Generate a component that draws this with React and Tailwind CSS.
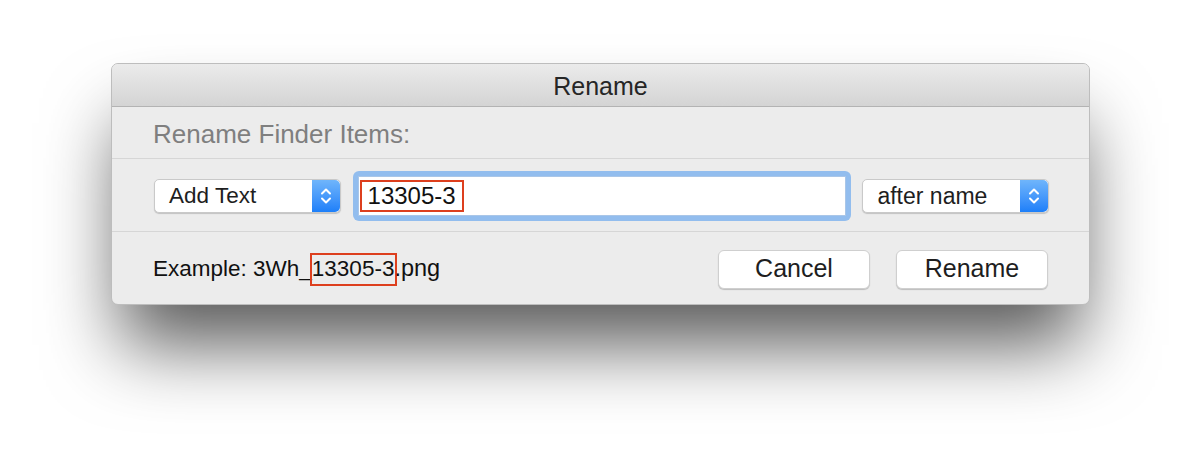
import React from 'react';

const font = { fontFamily: '"Liberation Sans", Arial, sans-serif' };

function Stepper() {
    return (
        <div className="w-[28px] self-stretch flex items-center justify-center rounded-r-[5px] bg-gradient-to-b from-[#6fb5fb] to-[#1c7ff9]">
            <svg width="12" height="20" viewBox="0 0 12 20" fill="none" stroke="white" strokeWidth="2" strokeLinecap="round" strokeLinejoin="round">
                <path d="M2 7.5 L6 3.5 L10 7.5" />
                <path d="M2 12.5 L6 16.5 L10 12.5" />
            </svg>
        </div>
    );
}

function Popup({ label, className, textSize }) {
    return (
        <div className={`h-[34px] flex items-stretch bg-white rounded-[5px] border border-[#c9c9c9] shadow-[0_1px_1px_rgba(0,0,0,0.18)] ${className}`}>
            <div className={`flex-1 flex items-center pl-[14px] text-[#1e1e1e] ${textSize}`}>{label}</div>
            <Stepper />
        </div>
    );
}

function Button({ children }) {
    return (
        <button className="w-[152px] h-[39px] bg-white rounded-[6px] border border-[#cfcfcf] shadow-[0_1px_1px_rgba(0,0,0,0.2)] text-[25px] text-[#1e1e1e] flex items-center justify-center">
            {children}
        </button>
    );
}

export default function App() {
    return (
        <div className="w-[1202px] h-[464px] bg-white pt-[63px] pl-[111px]" style={font}>
            <div className="w-[979px] rounded-[7px] bg-[#ececec] border border-[#bdbdbd] shadow-[0_50px_75px_-10px_rgba(0,0,0,0.65)] overflow-hidden">
                {/* title bar */}
                <div className="h-[43px] pt-[4px] flex items-center justify-center bg-gradient-to-b from-[#ebebeb] to-[#d4d4d4] border-b border-[#b3b3b3] text-[25px] text-[#262626]">
                    Rename
                </div>

                {/* heading */}
                <div className="h-[52px] pt-[4px] flex items-center pl-[41px] border-b border-[#d6d6d6] text-[26px] text-[#7f7f7f]">
                    Rename Finder Items:
                </div>

                {/* controls */}
                <div className="h-[73px] pt-[2px] flex items-center pl-[42px] pr-[40px] border-b border-[#d6d6d6]">
                    <Popup label="Add Text" className="w-[187px]" textSize="text-[22.5px]" />
                    <div className="ml-[12px] w-[500px] h-[50px] rounded-[6px] bg-[#92bdee] p-[5px]">
                        <div className="w-full h-full bg-white border border-[#a9c6e8] flex items-center pl-[1px]">
                            <span className="border-2 border-[#dd3f1e] h-[32px] flex items-center px-[6px] text-[24px] text-[#111]">13305-3</span>
                        </div>
                    </div>
                    <Popup label="after name" className="ml-[11px] w-[187px]" textSize="text-[23px]" />
                </div>

                {/* footer */}
                <div className="h-[72px] pt-[2px] flex items-center pl-[41px] pr-[41px]">
                    <div className="flex items-center text-[22.5px] text-[#111]">
                        <span>Example: 3Wh_</span>
                        <span className="border-2 border-[#dd3f1e] h-[33px] flex items-center -ml-[2px] -mr-[3px] pr-[1px]">13305-3</span>
                        <span className="text-[23.5px]">.png</span>
                    </div>
                    <div className="ml-auto flex gap-[26px]">
                        <Button>Cancel</Button>
                        <Button>Rename</Button>
                    </div>
                </div>
            </div>
        </div>
    );
}
